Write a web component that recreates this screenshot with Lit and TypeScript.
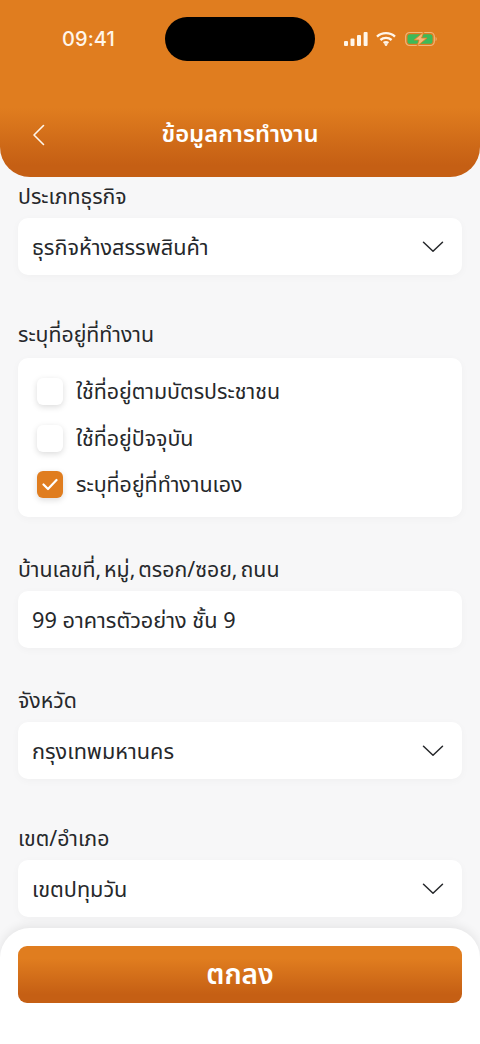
import { LitElement, html, css, svg } from "lit";
import { customElement } from "lit/decorators.js";

const chevron = svg`<svg class="chev" width="22" height="14" viewBox="0 0 22 14" fill="none"><path d="M1.5 2.2 L11 11.2 L20.5 2.2" stroke="#26282b" stroke-width="1.5" stroke-linecap="round" stroke-linejoin="round"/></svg>`;

@customElement("app-root")
export class AppRoot extends LitElement {
  static styles = css`
    :host {
      display: block;
      width: 480px;
      height: 1044px;
      font-family: "Noto Sans Thai", "Noto Sans Thai Looped", "Noto Sans", "Noto Sans CJK SC", "DejaVu Sans", sans-serif;
      color: #26282b;
      background: #f7f7f8;
      overflow: hidden;
    }
    .page { height: 1044px; display: flex; flex-direction: column; position: relative; }
    .header {
      height: 177px;
      flex: none;
      border-radius: 0 0 30px 30px;
      background: linear-gradient(180deg, #e07d1f 0, #e07d1f 108px, #c55f14 165px);
      color: #fff;
      display: flex;
      flex-direction: column;
      position: relative;
      z-index: 1;
    }
    .status { height: 96px; flex: none; box-sizing: border-box; padding: 17px 0 0 62px; display: flex; align-items: flex-start; }
    .time { font: 500 20px/44px "Inter", sans-serif; letter-spacing: 0.1px; width: 103px; color: #fff6ea; }
    .island { width: 150px; height: 44px; border-radius: 22px; background: #000; margin-right: 29px; }
    .icons { display: flex; align-items: center; gap: 8px; height: 44px; }
    .batt { margin-left: 1px; }
    .nav { height: 78px; display: flex; align-items: center; justify-content: center; position: relative; }
    .back { position: absolute; left: 31px; top: 28px; }
    .title { font-size: 23.8px; font-weight: 600; line-height: 30px; }
    .content { flex: 1; min-height: 0; overflow: hidden; padding: 9px 18px 0; display: flex; flex-direction: column; }
    .field { display: flex; flex-direction: column; gap: 8px; margin-bottom: 42px; flex: none; }
    .field.wide { margin-bottom: 51px; }
    .field.mid { margin-bottom: 49px; }
    .field.raised { gap: 10px; margin-top: -2px; }
    .label { font-size: 21.3px; line-height: 24px; height: 24px; }
    .label.addr { word-spacing: -2.6px; }
    .box {
      background: #fff;
      border-radius: 10px;
      height: 57px;
      display: flex;
      align-items: center;
      justify-content: space-between;
      padding: 0 18px 0 14px;
      font-size: 21.7px;
      box-shadow: 0 2px 8px rgba(0, 0, 0, 0.03);
    }
    .value { padding-top: 4px; }
    .card {
      background: #fff;
      border-radius: 10px;
      height: 159px;
      box-sizing: border-box;
      padding: 20px 19px 0;
      display: flex;
      flex-direction: column;
      gap: 19.5px;
      box-shadow: 0 2px 8px rgba(0, 0, 0, 0.03);
    }
    .opt { display: flex; align-items: center; gap: 13px; height: 27px; font-size: 21.4px; }
    .opt-text { padding-top: 2px; }
    .cb { width: 26px; height: 27px; border-radius: 6px; background: #fff; box-shadow: 0 2px 6px rgba(0, 0, 0, 0.14); display: flex; align-items: center; justify-content: center; flex: none; }
    .cb.on { background: #e07d1f; }
    .footer {
      position: absolute;
      left: 0;
      right: 0;
      bottom: 0;
      height: 116px;
      box-sizing: border-box;
      background: #fff;
      border-radius: 30px 30px 0 0;
      padding: 18px 18px 0;
      box-shadow: 0 -3px 10px rgba(0, 0, 0, 0.07);
    }
    .btn {
      height: 57px;
      border-radius: 9px;
      box-sizing: border-box;
      padding-top: 2px;
      background: linear-gradient(180deg, #e07d1f 0, #e07d1f 22%, #c55f14 85%);
      color: #fff;
      display: flex;
      align-items: center;
      justify-content: center;
      font-size: 28px;
      font-weight: 600;
    }
  `;

  private select(label: string, value: string, cls = "") {
    return html`<div class="field ${cls}">
      <div class="label">${label}</div>
      <div class="box"><span class="value">${value}</span>${chevron}</div>
    </div>`;
  }

  render() {
    return html`<div class="page">
      <div class="header">
        <div class="status">
          <div class="time">09:41</div>
          <div class="island"></div>
          <div class="icons">
            <svg width="24" height="16" viewBox="0 0 24 16"><rect x="0" y="10" width="4" height="5" rx="1" fill="#fff6ea"/><rect x="6.5" y="7.5" width="4" height="7.5" rx="1" fill="#fff6ea"/><rect x="13" y="4" width="4" height="11" rx="1" fill="#fff6ea"/><rect x="19.6" y="1" width="4" height="14" rx="1" fill="#fff6ea"/></svg>
            <svg width="20" height="16" viewBox="0 0 20 16" fill="none" stroke="#fff6ea" stroke-width="2.4"><path d="M1 5.6 C6 1 14 1 19 5.6"/><path d="M4.4 9 C7.6 6.2 12.4 6.2 15.6 9"/><path d="M7.6 12 C9 11 11 11 12.4 12"/><circle cx="10" cy="13.6" r="1" fill="#fff6ea" stroke-width="1"/></svg>
            <svg class="batt" width="33" height="16" viewBox="0 0 33 16"><rect x="0.7" y="1.5" width="28.6" height="13" rx="4" fill="none" stroke="#f0b67a" stroke-width="1.2"/><rect x="2.5" y="3.2" width="25" height="9.6" rx="2.6" fill="#3dba58"/><path d="M30.6 6 C32 6.4 32 9.6 30.6 10Z" fill="#f0b67a"/><path d="M19 0.8 L9 9 H14 L12 15.2 L22 7 H16.6 Z" fill="#f5b877" stroke="#e07d1f" stroke-width="0.8"/></svg>
          </div>
        </div>
        <div class="nav">
          <svg class="back" width="14" height="22" viewBox="0 0 14 22" fill="none"><path d="M12.5 1.5 L3 11 L12.5 20.5" stroke="#fff6ea" stroke-width="1.6" stroke-linecap="round" stroke-linejoin="round"/></svg>
          <div class="title">ข้อมูลการทำงาน</div>
        </div>
      </div>
      <div class="content">
        ${this.select("ประเภทธุรกิจ", "ธุรกิจห้างสรรพสินค้า", "wide")}
        <div class="field raised">
          <div class="label">ระบุที่อยู่ที่ทำงาน</div>
          <div class="card">
            <div class="opt"><span class="cb"></span><span class="opt-text">ใช้ที่อยู่ตามบัตรประชาชน</span></div>
            <div class="opt"><span class="cb"></span><span class="opt-text">ใช้ที่อยู่ปัจจุบัน</span></div>
            <div class="opt"><span class="cb on"><svg width="16" height="13" viewBox="0 0 16 13" fill="none"><path d="M1.5 6.5 L6 11 L14.5 2" stroke="#fff" stroke-width="2.2" stroke-linecap="round" stroke-linejoin="round"/></svg></span><span class="opt-text">ระบุที่อยู่ที่ทำงานเอง</span></div>
          </div>
        </div>
        <div class="field">
          <div class="label addr">บ้านเลขที่, หมู่, ตรอก/ซอย, ถนน</div>
          <div class="box"><span class="value">99 อาคารตัวอย่าง ชั้น 9</span></div>
        </div>
        ${this.select("จังหวัด", "กรุงเทพมหานคร", "mid")}
        ${this.select("เขต/อำเภอ", "เขตปทุมวัน")}
      </div>
      <div class="footer"><div class="btn">ตกลง</div></div>
    </div>`;
  }
}
